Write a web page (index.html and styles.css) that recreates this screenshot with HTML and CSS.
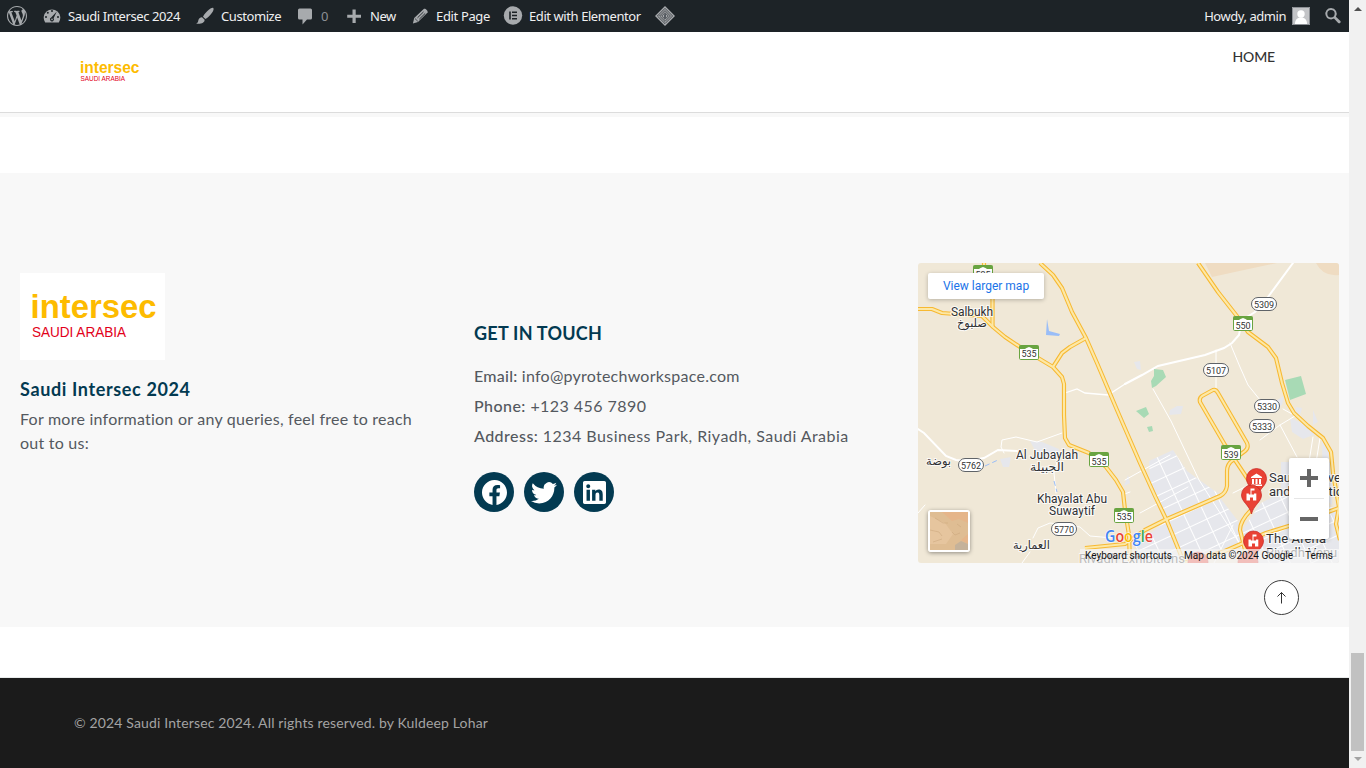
FILE: index.html
```html
<!DOCTYPE html>
<html lang="en">
<head>
<meta charset="utf-8">
<title>Saudi Intersec 2024</title>
<link rel="stylesheet" href="styles.css">
</head>
<body>
<div class="page">
  <nav class="adminbar">
    <svg class="ab-wp" viewBox="0 0 20 20" width="20" height="20"><path d="M20 10c0-5.51-4.49-10-10-10C4.48 0 0 4.49 0 10c0 5.52 4.48 10 10 10 5.51 0 10-4.48 10-10zM7.78 15.37L4.37 6.22c.55-.02 1.17-.08 1.17-.08.5-.06.44-1.13-.06-1.11 0 0-1.45.11-2.37.11-.18 0-.37 0-.58-.01C4.12 2.69 6.87 1.11 10 1.11c2.33 0 4.45.87 6.05 2.34-.68-.11-1.65.39-1.65 1.58 0 .74.45 1.36.9 2.1.35.61.55 1.36.55 2.46 0 1.49-1.4 5-1.4 5l-3.03-8.37c.54-.02.82-.17.82-.17.5-.05.44-1.25-.06-1.22 0 0-1.44.12-2.38.12-.87 0-2.33-.12-2.33-.12-.5-.03-.56 1.2-.06 1.22l.92.08 1.26 3.41zM17.41 10c.24-.64.74-1.87.43-4.25.7 1.29 1.05 2.71 1.05 4.25 0 3.29-1.73 6.24-4.4 7.78.97-2.59 1.94-5.2 2.92-7.78zM6.1 18.09C3.12 16.65 1.11 13.53 1.11 10c0-1.3.23-2.48.72-3.59C3.25 10.3 4.67 14.2 6.1 18.09zm4.03-6.63l2.58 6.98c-.86.29-1.76.45-2.71.45-.79 0-1.57-.11-2.29-.33.81-2.38 1.62-4.74 2.42-7.1z"/></svg>
    <a class="ab-item ab-site"><svg viewBox="0 0 20 20" width="20" height="20"><path d="M3.2 16.5h13.6A8.3 8.3 0 1 0 3.2 16.5z"/><g fill="#1d2327"><circle cx="10" cy="5" r="1"/><circle cx="5.8" cy="6.8" r="1"/><circle cx="4" cy="11" r="1"/><circle cx="16" cy="11" r="1"/><path d="M14.8 5.5l-3.2 6.8a2 2 0 1 1-2.4-.7z"/></g><circle cx="10" cy="13.4" r=".8"/></svg><span>Saudi Intersec 2024</span></a>
    <a class="ab-item ab-custom"><svg viewBox="0 0 20 20" width="20" height="20"><path d="M18.3 1.9c.9.8-.2 3.3-1.5 5.1-1.6 2.1-4.2 4.9-6.4 6.1L8 10.700c1.100-2.300 3.700-5 5.800-6.900 1.700-1.400 3.700-2.500 4.500-1.900zM7.300 11.400l2.300 2.300c.3 2.800-3.700 4.700-8.400 3.900 2.200-.9 1.700-2.100 2.300-3.800.600-1.800 2.300-2.700 3.800-2.400z"/></svg><span>Customize</span></a>
    <a class="ab-item ab-comments"><svg viewBox="0 0 20 20" width="20" height="20"><path d="M4.500 2.500h11a1.500 1.500 0 0 1 1.500 1.500v8a1.500 1.500 0 0 1-1.500 1.500H12l-4.500 5v-5h-3A1.500 1.500 0 0 1 3 12V4a1.500 1.500 0 0 1 1.500-1.500z"/></svg><span>0</span></a>
    <a class="ab-item ab-new"><svg viewBox="0 0 20 20" width="20" height="20"><path d="M8.500 3.500h3.200v5.300H17v3h-5.300V17H8.500v-5.200H3.200v-3h5.300z"/></svg><span>New</span></a>
    <a class="ab-item ab-edit"><svg viewBox="0 0 20 20" width="20" height="20"><path d="M14 2.700c1.600-.4 4 1.900 3.600 3.700L8 15.900l-5.100 1.600 1.300-5.400z"/><path d="M7.500 11.800l6-5.900M9.300 13.200l5.900-5.800" stroke="#1d2327" stroke-width=".9"/><path d="M5 12.600l2.900 2.800" stroke="#1d2327" stroke-width=".7"/></svg><span>Edit Page</span></a>
    <a class="ab-item ab-elementor"><svg viewBox="0 0 20 20" width="20" height="20"><circle cx="10" cy="9.500" r="9.200"/><path d="M6.200 5.500h1.600v8H6.200zM9 5.500h5v1.600H9zm0 3.200h5v1.600H9zm0 3.200h5v1.600H9z" fill="#1d2327"/></svg><span>Edit with Elementor</span></a>
    <svg class="ab-diamond" viewBox="0 0 20 20" width="20" height="20"><path d="M10 0L20 10 10 20 0 10z"/><g fill="none" stroke="#1d2327" stroke-width=".7"><path d="M10 2.400L17.600 10 10 17.600 2.400 10z"/><path d="M10 4.600l5.400 5.400-5.400 5.400L4.600 10z"/><path d="M10 6.700l3.300 3.300-3.300 3.300L6.700 10z"/></g><path d="M9 8.500l2-1v5l-2 .500z" fill="#555b61"/></svg>
    <a class="ab-user"><span>Howdy, admin</span><svg viewBox="0 0 18 18" width="18" height="18"><path fill="#c3c4c7" d="M0 0h18v18H0z"/><path fill="none" stroke="#8c8f94" d="M.5.5h17v17H.5z"/><circle cx="9" cy="7" r="3.700" fill="#fff"/><path fill="#fff" d="M3 17c0-4 2-6.500 6-6.500s6 2.500 6 6.500z"/></svg></a>
    <svg class="ab-search" viewBox="0 0 20 20" width="20" height="20"><path fill-rule="evenodd" d="M8 2a5.700 5.700 0 0 1 4.900 8.700l4.500 4.200c1 1.300-.8 3.200-2.200 2.100L11 12.600A5.700 5.700 0 1 1 8 2zm0 2a3.700 3.700 0 1 0 0 7.400A3.700 3.700 0 0 0 8 4z"/></svg>
  </nav>

  <header class="header">
    <svg class="logo-small" viewBox="0 0 62 24" width="62" height="24"><text class="logo-name" x="0" y="14" font-size="16" textLength="59.500" lengthAdjust="spacingAndGlyphs">intersec</text><text class="logo-sub" x="0.500" y="22" font-size="6.300" textLength="44.500" lengthAdjust="spacingAndGlyphs">SAUDI ARABIA</text></svg>
    <a class="home">HOME</a>
  </header>

  <section class="contact">
    <div class="about">
      <svg class="logo-large" viewBox="0 0 145 87" width="145" height="87"><path fill="#fff" d="M0 0h145v87H0z"/><text class="logo-name" x="10.500" y="44.800" font-size="34" textLength="126" lengthAdjust="spacingAndGlyphs">intersec</text><text class="logo-sub" x="12" y="63.500" font-size="14.500" textLength="94" lengthAdjust="spacingAndGlyphs">SAUDI ARABIA</text></svg>
      <h2>Saudi Intersec 2024</h2>
      <p>For more information or any queries, feel free to reach<br>out to us:</p>
    </div>
    <div class="touch">
      <h2>GET IN TOUCH</h2>
      <p class="email"><b>Email:</b> info@pyrotechworkspace.com</p>
      <p class="phone"><b>Phone:</b> +123 456 7890</p>
      <p class="address"><b>Address:</b> 1234 Business Park, Riyadh, Saudi Arabia</p>
      <div class="social">
        <a><svg viewBox="0 0 16 16" width="25" height="25"><path d="M16 8.049c0-4.446-3.582-8.050-8-8.050C3.580 0-.002 3.603-.002 8.050c0 4.017 2.926 7.347 6.750 7.951v-5.625h-2.030V8.050H6.750V6.275c0-2.017 1.195-3.131 3.022-3.131.876 0 1.791.157 1.791.157v1.980h-1.009c-.993 0-1.303.621-1.303 1.258v1.510h2.218l-.354 2.326H9.250V16c3.824-.604 6.750-3.934 6.750-7.951"/></svg></a>
        <a><svg viewBox="0 0 16 16" width="26" height="26"><path d="M5.026 15c6.038 0 9.341-5.003 9.341-9.334q.002-.211-.006-.422A6.700 6.700 0 0 0 16 3.542a6.700 6.700 0 0 1-1.889.518 3.300 3.300 0 0 0 1.447-1.817 6.500 6.500 0 0 1-2.087.793A3.286 3.286 0 0 0 7.875 6.030a9.320 9.320 0 0 1-6.767-3.429 3.290 3.290 0 0 0 1.018 4.382A3.300 3.300 0 0 1 .640 6.575v.045a3.290 3.290 0 0 0 2.632 3.218 3.200 3.200 0 0 1-.865.115 3 3 0 0 1-.614-.057 3.280 3.280 0 0 0 3.067 2.277A6.600 6.600 0 0 1 .780 13.580a6 6 0 0 1-.780-.045A9.340 9.340 0 0 0 5.026 15"/></svg></a>
        <a><svg viewBox="0 0 448 448" width="23" height="23"><path fill-rule="evenodd" d="M416 0H31.900C14.300 0 0 14.500 0 32.300v383.400C0 433.500 14.300 448 31.900 448H416c17.600 0 32-14.500 32-32.300V32.300C448 14.500 433.600 0 416 0zM135.400 384H69V170.200h66.500V384zm-33.200-243c-21.300 0-38.500-17.300-38.500-38.500S80.900 64 102.200 64c21.200 0 38.500 17.300 38.500 38.500 0 21.300-17.200 38.500-38.500 38.500zm282.100 243h-66.400V280c0-24.800-.5-56.700-34.500-56.700-34.600 0-39.900 27-39.900 54.900V384h-66.400V170.200h63.700v29.200h.9c8.900-16.800 30.600-34.500 62.900-34.500 67.200 0 79.700 44.300 79.700 101.900z"/></svg></a>
      </div>
    </div>
    <div class="map">
      <svg class="map-art" viewBox="918 263 421 300" width="421" height="300">
        <defs>
          <pattern id="blocks" width="19" height="14" patternUnits="userSpaceOnUse" patternTransform="rotate(-25)"><path fill="#e6e7ec" d="M0 0h19v14H0z"/><path d="M0 .5h19M.5 0v14" stroke="#fff"/></pattern>
          <path id="r1" d="M918 309h14l10 4 13 1 27 2 11 11 12 10 15 10 18 11 15 9 9 10 2 7v31l1 23 4 7 20 8 17 14 10 13 7 12 2 18 4 25 1 28"/>
          <path id="r2" d="M1040 263l13 12 9 13 10 24 14 26 11 25 20 47 13 30 10 23 15 33 12 25 13 32 5 13"/>
          <path id="r3" d="M1198 263l20 29 22 28 8 12 20 15 8 11 6 25 6 20 6 10 14 13 15 12 8 14 2 21 6 34-3 17 4 16"/>
          <path id="r4" d="M1249 481l-24-36-25-43q-1-4 2-6l11-6q3-1 5 3l29 50q2 5-2 8l-12 9q-6 4-6 11v15q-1 7-7 10l-53 23-22 11-20 14-40 4"/>
          <path id="r5" d="M1251 510q-11 11-11 20l5 20M1183 563l42-12 41-18 26-8 47-17"/>
          <path id="r6" d="M1086 338l-16 9-8 6-9 14M992.500 280v47M984 263v20"/>
          <g id="shield"><rect width="19" height="14" rx="1.200" fill="#fff" stroke="#69a441"/><path fill="#69a441" d="M0 0h19v3.500h-5.500L12 2.500 9.500 1.500 7 2.500 5.500 3.500H0z"/></g>
          <g id="tower"><path fill="#fff" d="M-5 4.500v-7h2.300v1H-1v-6h4v2h-3v4h2.500v-1h2.300v7H1.500v-3h-3v3z"/></g>
        </defs>
        <path fill="#f0e8d7" d="M918 263h421v300H918z"/>
        <path fill="#efdcc2" d="M1205 263h72l-33 7-32 7zM1316 263h23v12q-16 2-23-12z"/>
        <path fill="#e6e7ec" d="M1030 441l12 1 17 7 1 8-21 1zM1000 459l11-2-2 10h-6zM1170 410l7-4h6l-2 8-12 1zM1134 362l6-1 1 9-4-1zM1277 400l7-4-2 9-5 2zM1296 407l6 1-2 7-5-1zM1313 410l5 12-5 3zM1290 418l14 6 12 10-13 5-11-7zM1322 440l10 10v55l-9-8zM1128 475l-4 11 6-3zM1281 462h9v30l-9-4z"/>
        <path fill="url(#blocks)" d="M1149 461l24-11 14 21 32 23-55 25-14-38zM1135 545l30-23 56-23 17 22 3 16-5 17-49 9h-43zM1243 529l18-26 25-13 53 20v53h-94z"/>
        <g fill="none" stroke="#fff" stroke-linecap="round">
          <path stroke-width="2" d="M1293 263l-25 34-13 15-13 8-3 15-7 8-8 5-19 7-47 11-16 9-17 9M918 429l6 4 22 23 10 4 10 1 18-3 14-8 19 1"/>
          <path stroke-width="1.300" d="M1125 384l-17 11-23-2-8-4-12 4"/>
          <path stroke-width="1" d="M1230 343l10 24 8 18 12 15M1216 350v40M1153 389l18 32 28 59 48 75M1062 433l-25 9-21-5-14 3-1 7 3 6M1059 455l-5 18 2 20M1022 563l8-11M1033 538l5-10 12-5 30 4 10 9 23 2M918 513l7-8M1130 492l-8 3M1125 480l45-25M1140 513l48-26M1233 493l14-7M1260 440l20-15 15-9M1280 425l17 32M1313 437l-4 25M1320 438l-4 25M1233 525l-19 38M1283 409l9 5"/>
        </g>
        <path fill="#a8dab5" d="M1154 369l9 1 3 7-10 9-4 2-1-7 3-5zM1136 411l10-4 3 7-5 4zM1147 427l5-1 1 5-4 1zM1285 380l16-4 5 18-16 6z"/>
        <path fill="#99bdf7" d="M1047 319l2 12 11 3-1 2-13-1z"/><path fill="none" stroke="#99bdf7" stroke-dasharray="5 3" d="M985 466l13-6M1054 481l3 11"/>
        <g fill="none" stroke="#f7b932" stroke-width="4.200" stroke-linejoin="round"><use href="#r1"/><use href="#r2"/><use href="#r3"/><use href="#r4"/><use href="#r5"/><use href="#r6"/></g>
        <g fill="none" stroke="#fde8a6" stroke-width="2.100" stroke-linejoin="round"><use href="#r1"/><use href="#r2"/><use href="#r3"/><use href="#r4"/><use href="#r5"/><use href="#r6"/></g>

        <use href="#shield" x="973.500" y="265.500"/><use href="#shield" x="1019.500" y="345.500"/><use href="#shield" x="1233.500" y="316.500"/><use href="#shield" x="1089.500" y="452.500"/><use href="#shield" x="1221.500" y="445.500"/><use href="#shield" x="1114.500" y="508.500"/>
        <g fill="#fff" stroke="#5f6368" stroke-width="1"><rect x="1251.500" y="297.500" width="25" height="13" rx="6.500"/><rect x="1203.500" y="363.500" width="25" height="13" rx="6.500"/><rect x="1254.500" y="399.500" width="25" height="13" rx="6.500"/><rect x="1249.500" y="419.500" width="25" height="13" rx="6.500"/><rect x="958.500" y="458.500" width="25" height="13" rx="6.500"/><rect x="1051.500" y="522.500" width="25" height="13" rx="6.500"/></g>
        <g class="route">
          <text x="983" y="277.500">535</text><text x="1029" y="357">535</text><text x="1243" y="328.500">550</text><text x="1099" y="464.500">535</text><text x="1231" y="457.500">539</text><text x="1124" y="520">535</text>
          <text x="1264" y="307.500">5309</text><text x="1216" y="373.500">5107</text><text x="1267" y="409.500">5330</text><text x="1262" y="429.500">5333</text><text x="971" y="468.500">5762</text><text x="1064" y="532.500">5770</text>
        </g>
        <g class="pins"><path d="M1256.500 468.500a10 10 0 0 1 10 10c0 7-6 9-10 18-4-9-10-11-10-18a10 10 0 0 1 10-10z"/><path fill="#fff" stroke="none" d="M1251 477l5.500-3.500 5.500 3.500v1h-11zM1252 479h2v5h-2zm3.500 0h2v5h-2zm3.500 0h2v5h-2zM1251 484.500h11v1.500h-11z"/><path d="M1251.500 485a10 10 0 0 1 10 10c0 7-8 10-10 19-2-9-10-12-10-19a10 10 0 0 1 10-10z"/><use href="#tower" x="1251.500" y="496"/><path d="M1253.500 531a10 10 0 0 1 10 10c0 7-8 10-10 19-2-9-10-12-10-19a10 10 0 0 1 10-10z"/><use href="#tower" x="1253.500" y="542"/><circle cx="1198" cy="562" r="10"/><circle cx="1248" cy="562" r="10"/></g>
        <g class="place">
          <text x="951" y="315.500" textLength="42">Salbukh</text><text class="arabic" x="957" y="327" textLength="30" lengthAdjust="spacingAndGlyphs">صلبوخ</text>
          <text x="1016" y="459" textLength="62">Al Jubaylah</text><text class="arabic" x="1030" y="471" textLength="34" lengthAdjust="spacingAndGlyphs">الجبيلة</text>
          <text x="1037" y="503" textLength="70">Khayalat Abu</text><text x="1049" y="515" textLength="46">Suwaytif</text>
          <text class="arabic" x="926" y="465" textLength="25" lengthAdjust="spacingAndGlyphs">بوضة</text><text class="arabic" x="1013" y="549" textLength="37" lengthAdjust="spacingAndGlyphs">العمارية</text>
          <g class="venue"><text x="1269" y="482">Saudi Conve</text><text x="1269" y="496">and Exhibitio</text><text x="1266" y="543" textLength="60">The Arena</text><text x="1266" y="557">Riyadh Venu</text><text x="1079" y="563" textLength="106">Riyadh Exhibitions</text></g>
        </g>
        <path fill="#f5f5f5" fill-opacity=".7" d="M1080 549h259v14h-259z"/>
        <text class="google" x="1105" y="542" textLength="48" lengthAdjust="spacingAndGlyphs"><tspan fill="#4285f4">G</tspan><tspan fill="#ea4335">o</tspan><tspan fill="#fbbc04">o</tspan><tspan fill="#4285f4">g</tspan><tspan fill="#34a853">l</tspan><tspan fill="#ea4335">e</tspan></text>
        <g class="credit"><text x="1085" y="559" textLength="87">Keyboard shortcuts</text><text x="1184" y="559" textLength="109">Map data ©2024 Google</text><text x="1305" y="559" textLength="28">Terms</text></g>
      </svg>
      <a class="larger">View larger map</a>
      <div class="satellite"><svg viewBox="0 0 38 38" width="38" height="38"><path fill="#dfbd93" d="M0 0h38v38H0z"/><path fill="#e5b58a" d="M12 0h26v11l-9-4-7 2zM38 22l-7 6 7 4z"/><path fill="#e6c59e" d="M0 4l15 7 8 11-7 10H0z"/><path fill="#c5b29a" d="M25 33l6-4 7 3v6H25z"/><path fill="none" stroke="#c9a47b" stroke-width=".5" d="M0 18l9 2 3 4M5 6l8 5 5 0M22 20l3 3 5-2M3 30l9-3M27 12l4 3"/></svg></div>
      <div class="zoom"><svg viewBox="0 0 40 81" width="40" height="81"><path fill="#666" d="M18 11h4v7h7v4h-7v7h-4v-7h-7v-4h7zM11 59h18v4H11z"/><path stroke="#e6e6e6" d="M5 40.500h30"/></svg></div>
    </div>
  </section>

  <footer class="footer"><span>© 2024 Saudi Intersec 2024. All rights reserved. by Kuldeep Lohar</span></footer>
  <a class="to-top"><svg viewBox="0 0 35 35" width="35" height="35"><circle cx="17.500" cy="17.500" r="17" fill="#fff" stroke="#3c3c3c"/><path fill="none" stroke="#333" d="M17.500 23.500v-11M13.500 16.500l4-4 4 4"/></svg></a>
</div>
<div class="scrollbar"><i class="arrow-up"></i><div class="thumb"></div><i class="arrow-down"></i></div>
</body>
</html>
```
FILE: styles.css
```css
* { box-sizing: border-box; }
body { margin: 0; height: 768px; display: flex; overflow: hidden; background: #fff; font-family: Lato, sans-serif; font-variant-ligatures: none; }
svg { display: block; flex: none; }
h2, p { margin: 0; white-space: nowrap; }
.page { position: relative; width: 1349px; height: 768px; display: flex; flex-direction: column; }

.adminbar { height: 32px; flex: none; background: #1d2327; color: #f0f0f1; display: flex; align-items: center; padding-left: 7px; font: 13px/32px "Noto Sans", sans-serif; white-space: nowrap; }
.adminbar > svg, .ab-item svg { fill: #a7aaad; }
.ab-item { display: flex; align-items: center; gap: 6px; }
.ab-item svg { width: 20px; }
.ab-item span { letter-spacing: -.42px; }
.ab-site { margin-left: 15px; width: 153px; }
.ab-custom { width: 100px; }
.ab-comments { width: 49px; }
.ab-comments span { color: #8c8f94; }
.ab-new { width: 66px; }
.ab-edit { width: 93px; }
.ab-edit span { letter-spacing: -.35px; }
.ab-elementor { width: 152px; }
.ab-user { display: flex; align-items: center; gap: 6px; margin-left: auto; margin-right: 13px; }
.ab-user span { letter-spacing: -.45px; }
.ab-search { margin-right: 6px; }

.header { height: 81px; flex: none; display: flex; justify-content: space-between; padding: 27px 74px 0 80px; border-bottom: 1px solid #dcdcdc; box-shadow: 0 4px 0 #f8f8f8; }
.logo-name { font-family: "Liberation Sans", sans-serif; font-weight: 700; fill: #fdbb00; }
.logo-sub { font-family: "Liberation Sans", sans-serif; fill: #e2001a; }
.home { font-size: 14px; line-height: 20px; margin-top: -12px; color: #333; font-weight: 500; letter-spacing: -.15px; }

.contact { margin-top: 60px; height: 454px; flex: none; background: #f8f8f8; display: grid; grid-template-columns: 454px 444px 421px; padding-left: 20px; }
.about { padding-top: 100px; }
.contact h2 { color: #033a51; font-size: 18px; line-height: 24px; font-weight: 700; }
.contact p { color: #54595f; font-size: 16px; }
.about h2 { margin-top: 17px; letter-spacing: .63px; }
.about p { margin-top: 6px; line-height: 24px; letter-spacing: .24px; }
.touch { padding-top: 148px; }
.touch h2 { letter-spacing: .25px; }
.touch p { line-height: 30px; }
.touch b { font-weight: 500; }
.touch h2 + p { margin-top: 16px; }
.email { letter-spacing: .25px; }
.phone { letter-spacing: .45px; }
.address { letter-spacing: .45px; }
.social { display: flex; gap: 10px; margin-top: 21px; }
.social a { width: 40px; height: 40px; border-radius: 50%; background: #033a51; display: flex; align-items: center; justify-content: center; }
.social svg { fill: #fff; }

.map { position: relative; margin-top: 90px; height: 300px; border-radius: 3px; overflow: hidden; }
.larger { position: absolute; left: 10px; top: 10px; width: 116px; height: 26px; background: #fff; border-radius: 2px; box-shadow: 0 1px 4px rgba(0,0,0,.25); color: #1a73e8; font: 12px/26px Roboto, sans-serif; text-align: center; }
.satellite { position: absolute; left: 10px; top: 247px; width: 42px; height: 42px; border: 2px solid #fff; border-radius: 3px; box-shadow: 0 1px 4px rgba(0,0,0,.4); }
.zoom { position: absolute; left: 371px; top: 195px; width: 40px; height: 81px; background: #fff; border-radius: 2px; box-shadow: 0 1px 4px rgba(0,0,0,.3); }
.route { font: 9px Roboto, sans-serif; fill: #333; text-anchor: middle; }
.place { font: 12px Roboto, sans-serif; fill: #303134; stroke: #fff; stroke-width: 2px; stroke-opacity: .8; paint-order: stroke; }
.venue { font-size: 13px; }
.arabic { font-family: "DejaVu Sans", sans-serif; font-size: 12px; }
.pins { fill: #e94235; stroke: #c5221f; stroke-width: .7; }
.pins use { stroke: none; }
.google { font: 600 17px "Open Sans", sans-serif; stroke: #fff; stroke-width: 1px; paint-order: stroke; }
.credit { font: 10px Roboto, sans-serif; fill: #111; }

.footer { margin-top: 50px; height: 91px; flex: none; border-top: 1px solid #e8ebeb; background: #1b1b1b; color: #a3a3a3; padding-left: 74px; font-size: 14px; line-height: 89px; letter-spacing: .15px; white-space: nowrap; }
.to-top { position: absolute; left: 1264px; top: 580px; }

.scrollbar { width: 17px; height: 768px; background: #f1f1f1; display: flex; flex-direction: column; align-items: center; }
.arrow-up { margin-top: 7px; border: 4px solid transparent; border-top: 0; border-bottom-color: #505050; }
.thumb { margin-top: 642px; width: 13px; height: 98px; background: #c1c1c1; }
.arrow-down { margin-top: 6px; border: 4px solid transparent; border-bottom: 0; border-top-color: #a3a3a3; }
```
